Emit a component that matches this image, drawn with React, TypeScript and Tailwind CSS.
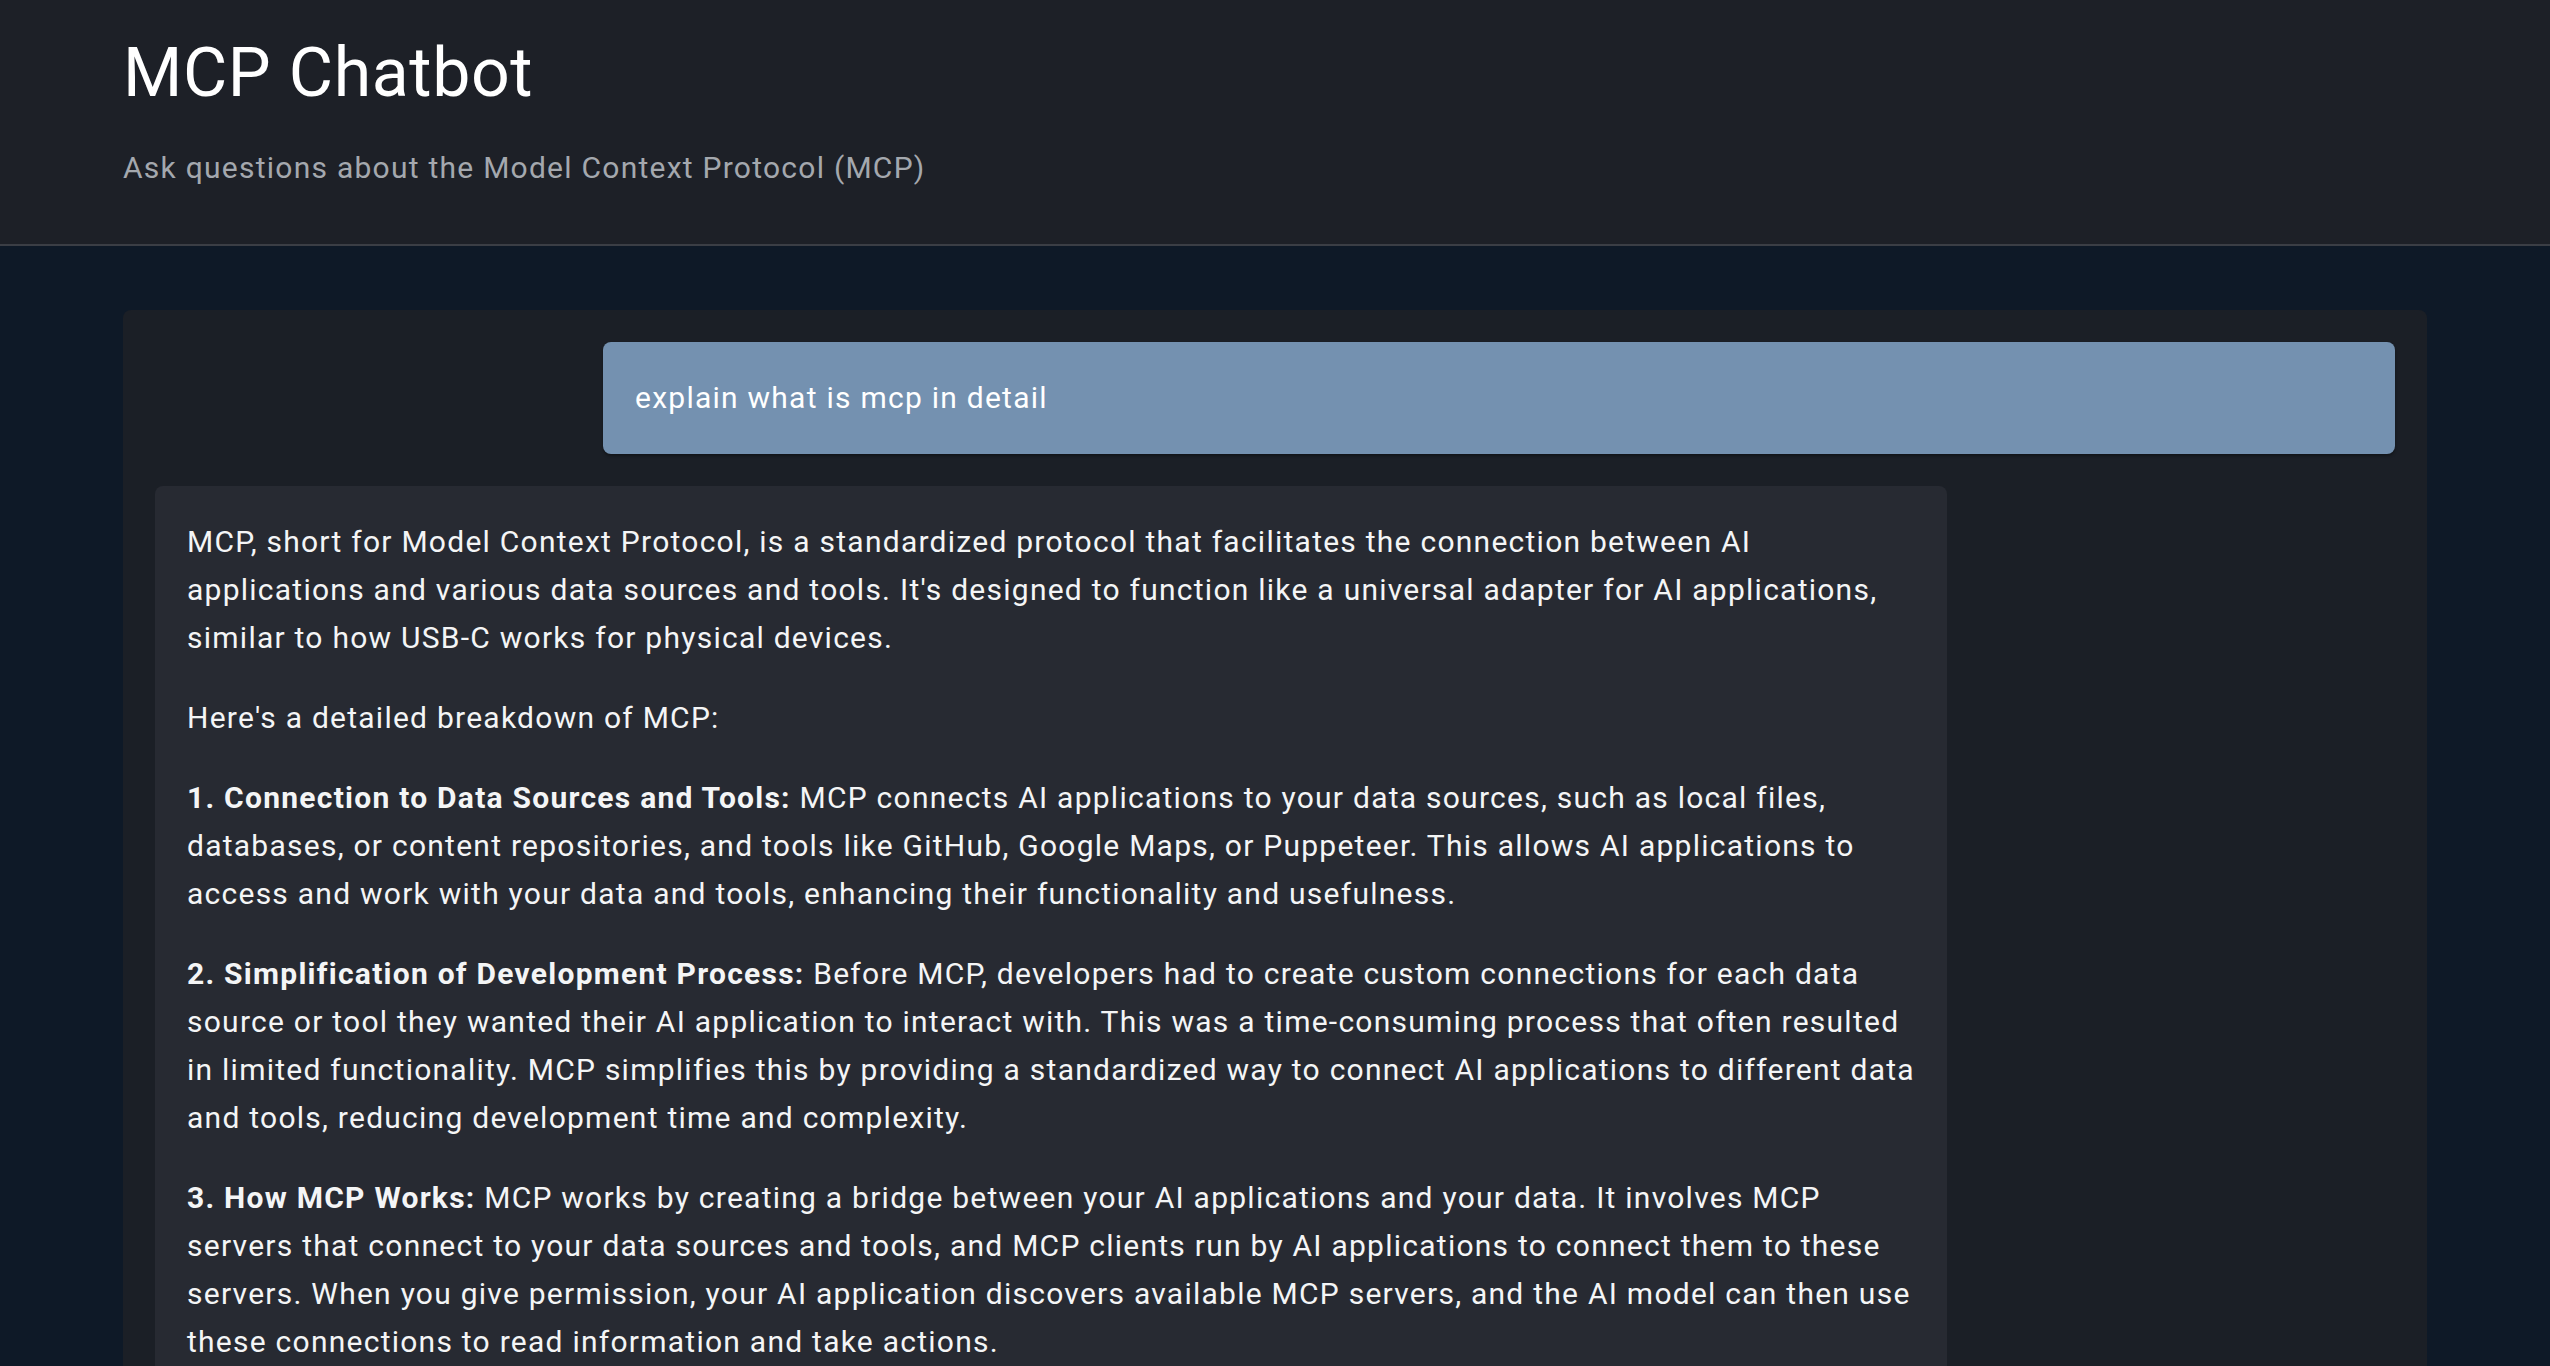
import React from "react";

type Msg = { role: "user" | "assistant"; parts: { bold?: string; text: string }[] };

const messages: Msg[] = [
  { role: "user", parts: [{ text: "explain what is mcp in detail" }] },
  {
    role: "assistant",
    parts: [
      {
        text: "MCP, short for Model Context Protocol, is a standardized protocol that facilitates the connection between AI applications and various data sources and tools. It's designed to function like a universal adapter for AI applications, similar to how USB-C works for physical devices.",
      },
      { text: "Here's a detailed breakdown of MCP:" },
      {
        bold: "1. Connection to Data Sources and Tools:",
        text: " MCP connects AI applications to your data sources, such as local files, databases, or content repositories, and tools like GitHub, Google Maps, or Puppeteer. This allows AI applications to access and work with your data and tools, enhancing their functionality and usefulness.",
      },
      {
        bold: "2. Simplification of Development Process:",
        text: " Before MCP, developers had to create custom connections for each data source or tool they wanted their AI application to interact with. This was a time-consuming process that often resulted in limited functionality. MCP simplifies this by providing a standardized way to connect AI applications to different data and tools, reducing development time and complexity.",
      },
      {
        bold: "3. How MCP Works:",
        text: " MCP works by creating a bridge between your AI applications and your data. It involves MCP servers that connect to your data sources and tools, and MCP clients run by AI applications to connect them to these servers. When you give permission, your AI application discovers available MCP servers, and the AI model can then use these connections to read information and take actions.",
      },
    ],
  },
];

export default function App() {
  return (
    <div
      className="min-h-screen bg-[#0e1927] text-[#f4f5f6]"
      style={{ fontFamily: "Roboto, 'Noto Sans', sans-serif" }}
    >
      {/* header */}
      <header className="bg-[#1d2027] border-b-2 border-[#3b3e45]">
        <div className="max-w-[2304px] mx-auto pt-[39px] pb-[52px]">
          <h1 className="text-[68px] leading-none font-normal tracking-[0.6px] text-white">
            MCP Chatbot
          </h1>
          <p className="mt-[37px] text-[30px] leading-[48px] tracking-[1.25px] text-[#a4a8ae]">
            Ask questions about the Model Context Protocol (MCP)
          </p>
        </div>
      </header>

      {/* chat */}
      <main className="max-w-[2304px] mx-auto pt-[64px]">
        <div className="bg-[#1b1f26] rounded-lg p-8 flex flex-col gap-8">
          {messages.map((m, i) =>
            m.role === "user" ? (
              <div
                key={i}
                className="w-4/5 ml-auto bg-[#7491b0] rounded-lg p-8 text-[30px] leading-[48px] tracking-[1.25px] text-white shadow-[0_2px_3px_rgba(0,0,0,0.35)]"
              >
                {m.parts[0].text}
              </div>
            ) : (
              <div
                key={i}
                className="w-4/5 bg-[#272a32] rounded-lg p-8 text-[30px] leading-[48px] tracking-[1.25px] flex flex-col gap-8"
              >
                {m.parts.map((p, j) => (
                  <p key={j}>
                    {p.bold && <strong className="font-bold">{p.bold}</strong>}
                    {p.text}
                  </p>
                ))}
              </div>
            )
          )}
        </div>
      </main>
    </div>
  );
}
